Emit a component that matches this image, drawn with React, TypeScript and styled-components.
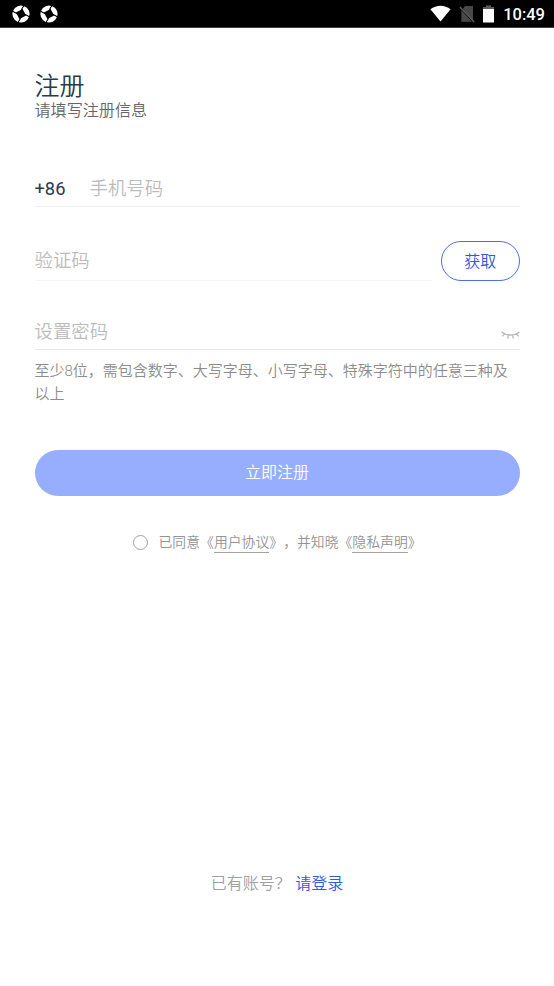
import React from "react";
import styled, { createGlobalStyle } from "styled-components";

const GlobalStyle = createGlobalStyle`
  *, *::before, *::after { box-sizing: border-box; }
  body {
    margin: 0;
    background: #fff;
    font-family: Roboto, "Noto Sans CJK SC", sans-serif;
    font-weight: 350;
    text-spacing-trim: space-all;
  }
`;

const Screen = styled.div`
  display: flex;
  flex-direction: column;
  height: 986px;
  overflow: hidden;
  background: #fff;
`;

const StatusBar = styled.header`
  display: flex;
  align-items: center;
  justify-content: space-between;
  flex: none;
  height: 28px;
  padding: 0 9px 0 12px;
  background: #000;
  border-bottom: 1px solid #404040;
  color: #fff;
`;

const StatusGroup = styled.div<{ $gap: number }>`
  display: flex;
  align-items: center;
  gap: ${(p) => p.$gap}px;
  svg { display: block; }
`;

const Clock = styled.span`
  margin-left: 1px;
  font-size: 16.5px;
  font-weight: 500;
  line-height: 27px;
  padding-top: 2px;
`;

const Content = styled.main`
  display: flex;
  flex-direction: column;
  flex: 1;
  padding: 44px 34.5px 0 34.5px;
`;

const Title = styled.h1`
  margin: 0;
  height: 28px;
  font-size: 25px;
  line-height: 30px;
  font-weight: 350;
  color: #2b3a4e;
`;

const Subtitle = styled.p`
  margin: 0;
  height: 22px;
  font-size: 16.1px;
  line-height: 22px;
  color: #666;
`;

const Field = styled.div<{ $top: number; $height: number; $line: string }>`
  display: flex;
  align-items: center;
  flex: none;
  height: ${(p) => p.$height}px;
  margin-top: ${(p) => p.$top}px;
  border-bottom: 1px solid ${(p) => p.$line};
`;

const CodeRow = styled.div`
  display: flex;
  align-items: flex-start;
  margin-top: 34px;
  gap: 9px;

  ${Field} {
    flex: 1;
  }
`;

const DialCode = styled.span`
  width: 55px;
  font-size: 18.3px;
  line-height: 24px;
  font-weight: 400;
  color: #2b3a4e;
`;

const Input = styled.input`
  flex: 1;
  min-width: 0;
  height: 28px;
  padding: 0;
  border: 0;
  outline: 0;
  background: transparent;
  font: 350 18.4px/28px Roboto, "Noto Sans CJK SC", sans-serif;
  color: #2b3a4e;
  &::placeholder { color: #bcbcbc; opacity: 1; }
`;

const CodeButton = styled.button`
  width: 78.5px;
  height: 40px;
  padding: 1px 0 0;
  border: 1px solid #4b6fe3;
  border-radius: 20px;
  background: #fff;
  font: 350 16px/36px Roboto, "Noto Sans CJK SC", sans-serif;
  color: #3058e0;
`;

const EyeIcon = styled.svg`
  display: block;
  margin-top: 6px;
`;

const Hint = styled.p`
  margin: 10px 0 0;
  font-size: 15px;
  line-height: 22.5px;
  color: #8c8c8c;
`;

const SubmitButton = styled.button`
  flex: none;
  height: 46px;
  margin: 45px 0 0;
  padding: 0 0 1px;
  border: 0;
  border-radius: 23px;
  background: #97adfd;
  font: 350 16px/24px Roboto, "Noto Sans CJK SC", sans-serif;
  color: #fff;
`;

const Agreement = styled.div`
  display: flex;
  align-items: center;
  align-self: flex-start;
  height: 22px;
  margin: 35px 0 0 98.5px;
  font-size: 13.85px;
  line-height: 20px;
  color: #949494;
  white-space: nowrap;
`;

const Radio = styled.span`
  width: 15px;
  height: 15px;
  margin-right: 10.5px;
  border: 1px solid #a0a0a0;
  border-radius: 50%;
`;

const AgreementLink = styled.a`
  height: 21px;
  border-bottom: 1px solid #a3a3a3;
`;

const Footer = styled.footer`
  display: flex;
  justify-content: center;
  margin-top: 319px;
  gap: 4.5px;
  font-size: 16px;
  line-height: 24px;
  color: #a0a0a0;
`;

const LoginLink = styled.a`
  color: #3058e0;
`;

function AppMark() {
  return (
    <svg width="18" height="18" viewBox="0 0 18 18">
      <circle cx="9" cy="9" r="8.6" fill="#fff" />
      <path d="M10.6 3.9L14.1 10.6L7.4 14.1L3.9 7.4Z" fill="#000" />
      <g fill="none" stroke="#000" strokeWidth="1.1">
        {[0, 90, 180, 270].map((angle) => (
          <path key={angle} transform={`rotate(${angle} 9 9)`} d="M9.4 5.4Q10.2 2.6 12.4 .2" />
        ))}
      </g>
    </svg>
  );
}

function WifiIcon() {
  return (
    <svg width="21" height="17" viewBox="0 0 21 17">
      <path d="M.4 4.3C6.4-.6 14.6-.6 20.6 4.3L10.5 16.5Z" fill="#fff" />
    </svg>
  );
}

function NoSimIcon() {
  return (
    <svg width="16" height="18" viewBox="0 0 16 18">
      <path d="M6 1H14V15.5L3.8 4Z" fill="#484848" />
      <path d="M2.4 5.3L13 16.8H2.4Z" fill="#484848" />
      <path d="M.9 2L15.2 17" stroke="#606060" strokeWidth="1.3" />
    </svg>
  );
}

function BatteryIcon() {
  return (
    <svg width="11" height="18" viewBox="0 0 11 18">
      <path d="M3 .5H8V2H11V5H0V2H3Z" fill="#5a5a5a" />
      <path d="M0 4H11V17.5H0Z" fill="#fff" />
    </svg>
  );
}

export default function App() {
  return (
    <>
      <GlobalStyle />
      <Screen>
        <StatusBar>
          <StatusGroup $gap={10}>
            <AppMark />
            <AppMark />
          </StatusGroup>
          <StatusGroup $gap={8}>
            <WifiIcon />
            <NoSimIcon />
            <BatteryIcon />
            <Clock>10:49</Clock>
          </StatusGroup>
        </StatusBar>
        <Content>
          <Title>注册</Title>
          <Subtitle>请填写注册信息</Subtitle>
          <Field $top={50} $height={35} $line="#f0f0f0">
            <DialCode>+86</DialCode>
            <Input placeholder="手机号码" />
          </Field>
          <CodeRow>
            <Field $top={0} $height={40} $line="#f5f5f5">
              <Input placeholder="验证码" />
            </Field>
            <CodeButton>获取</CodeButton>
          </CodeRow>
          <Field $top={33} $height={36} $line="#ebebeb">
            <Input placeholder="设置密码" />
            <EyeIcon width="19" height="8" viewBox="0 0 19 8" fill="none" stroke="#b8b8b8" strokeWidth="1.3">
              <path d="M.7 1C5 5 14 5 18.3 1M3.5 3L1.3 5.4M7.5 4.2L6.7 7.5M11.5 4.2L12.3 7.5M15.5 3L17.7 5.4" />
            </EyeIcon>
          </Field>
          <Hint>至少8位，需包含数字、大写字母、小写字母、特殊字符中的任意三种及以上</Hint>
          <SubmitButton>立即注册</SubmitButton>
          <Agreement>
            <Radio />
            <span>已同意《</span>
            <AgreementLink>用户协议</AgreementLink>
            <span>》，并知晓《</span>
            <AgreementLink>隐私声明</AgreementLink>
            <span>》</span>
          </Agreement>
          <Footer>
            <span>已有账号？</span>
            <LoginLink>请登录</LoginLink>
          </Footer>
        </Content>
      </Screen>
    </>
  );
}
